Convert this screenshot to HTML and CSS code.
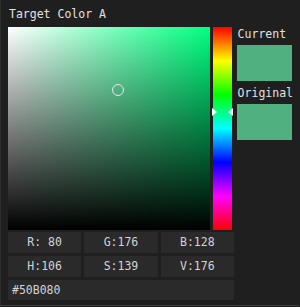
FILE: index.html
```html
<!DOCTYPE html>
<html lang="en">
<head>
  <meta charset="UTF-8">
  <title>Target Color A</title>
  <link rel="stylesheet" href="styles.css">
</head>
<body>
  <div class="window">
    <div class="title">Target Color A</div>

    <div class="picker">
      <div class="sv">
        <div class="sv-dark"></div>
        <div class="sv-cursor" style="left: 104px; top: 57px;"></div>
      </div>

      <div class="hue">
        <div class="hue-arrow left" style="top: 81px;"></div>
        <div class="hue-arrow right" style="top: 81px;"></div>
      </div>

      <div class="side">
        <div class="label">Current</div>
        <div class="swatch"></div>
        <div class="label second">Original</div>
        <div class="swatch"></div>
      </div>
    </div>

    <div class="fields">
      <div class="field">R: 80</div>
      <div class="field">G:176</div>
      <div class="field">B:128</div>
      <div class="field">H:106</div>
      <div class="field">S:139</div>
      <div class="field">V:176</div>
      <div class="field hex">#50B080</div>
    </div>
  </div>
</body>
</html>
```

FILE: styles.css
```css
html, body {
  margin: 0;
  background: #1f1f1f;
}

.window {
  width: 299px;
  height: 306px;
  box-sizing: border-box;
  padding: 6px 6px 0 7px;
  border-left: 1px solid #2e2e2e;
  border-bottom: 1px solid #3d3d3d;
  font-family: "DejaVu Sans Mono", monospace;
  font-size: 11.5px;
  color: #e2e2e2;
}

.title {
  height: 17px;
  line-height: 17px;
  margin-bottom: 4px;
  padding-left: 1px;
}

.picker {
  display: flex;
  align-items: flex-start;
}

.sv {
  position: relative;
  width: 204px;
  height: 203px;
  background: linear-gradient(to right, #ffffff, #00ff80);
}

.sv-dark {
  position: absolute;
  inset: 0;
  background: linear-gradient(to bottom, rgba(0, 0, 0, 0), #000000);
}

.sv-cursor {
  position: absolute;
  width: 10px;
  height: 10px;
  border: 1.5px solid #e8e8e8;
  border-radius: 50%;
}

.hue {
  position: relative;
  width: 19px;
  height: 203px;
  margin-left: 3px;
  background: linear-gradient(to bottom,
    #ff0000 0%, #ffff00 16.67%, #00ff00 33.33%, #00ffff 50%,
    #0000ff 66.67%, #ff00ff 83.33%, #ff0000 100%);
}

.hue-arrow {
  position: absolute;
  width: 0;
  height: 0;
  border-top: 4px solid transparent;
  border-bottom: 4px solid transparent;
}

.hue-arrow.left {
  left: -1px;
  border-left: 5px solid #ffffff;
}

.hue-arrow.right {
  right: -1px;
  border-right: 5px solid #ffffff;
}

.side {
  margin-left: 5px;
  display: flex;
  flex-direction: column;
}

.label {
  height: 18px;
  line-height: 14px;
  padding-left: 1px;
}

.label.second {
  margin-top: 5px;
}

.swatch {
  width: 55px;
  height: 36px;
  background: #50b080;
}

.fields {
  margin-top: 2px;
  width: 226px;
  display: grid;
  grid-template-columns: repeat(3, 1fr);
  gap: 3px;
}

.field {
  height: 21px;
  line-height: 21px;
  text-align: center;
  background: #2a2a2a;
  color: #d4d4d4;
}

.field.hex {
  grid-column: 1 / 4;
  height: 20px;
  line-height: 20px;
  text-align: left;
  padding-left: 4px;
}
```
